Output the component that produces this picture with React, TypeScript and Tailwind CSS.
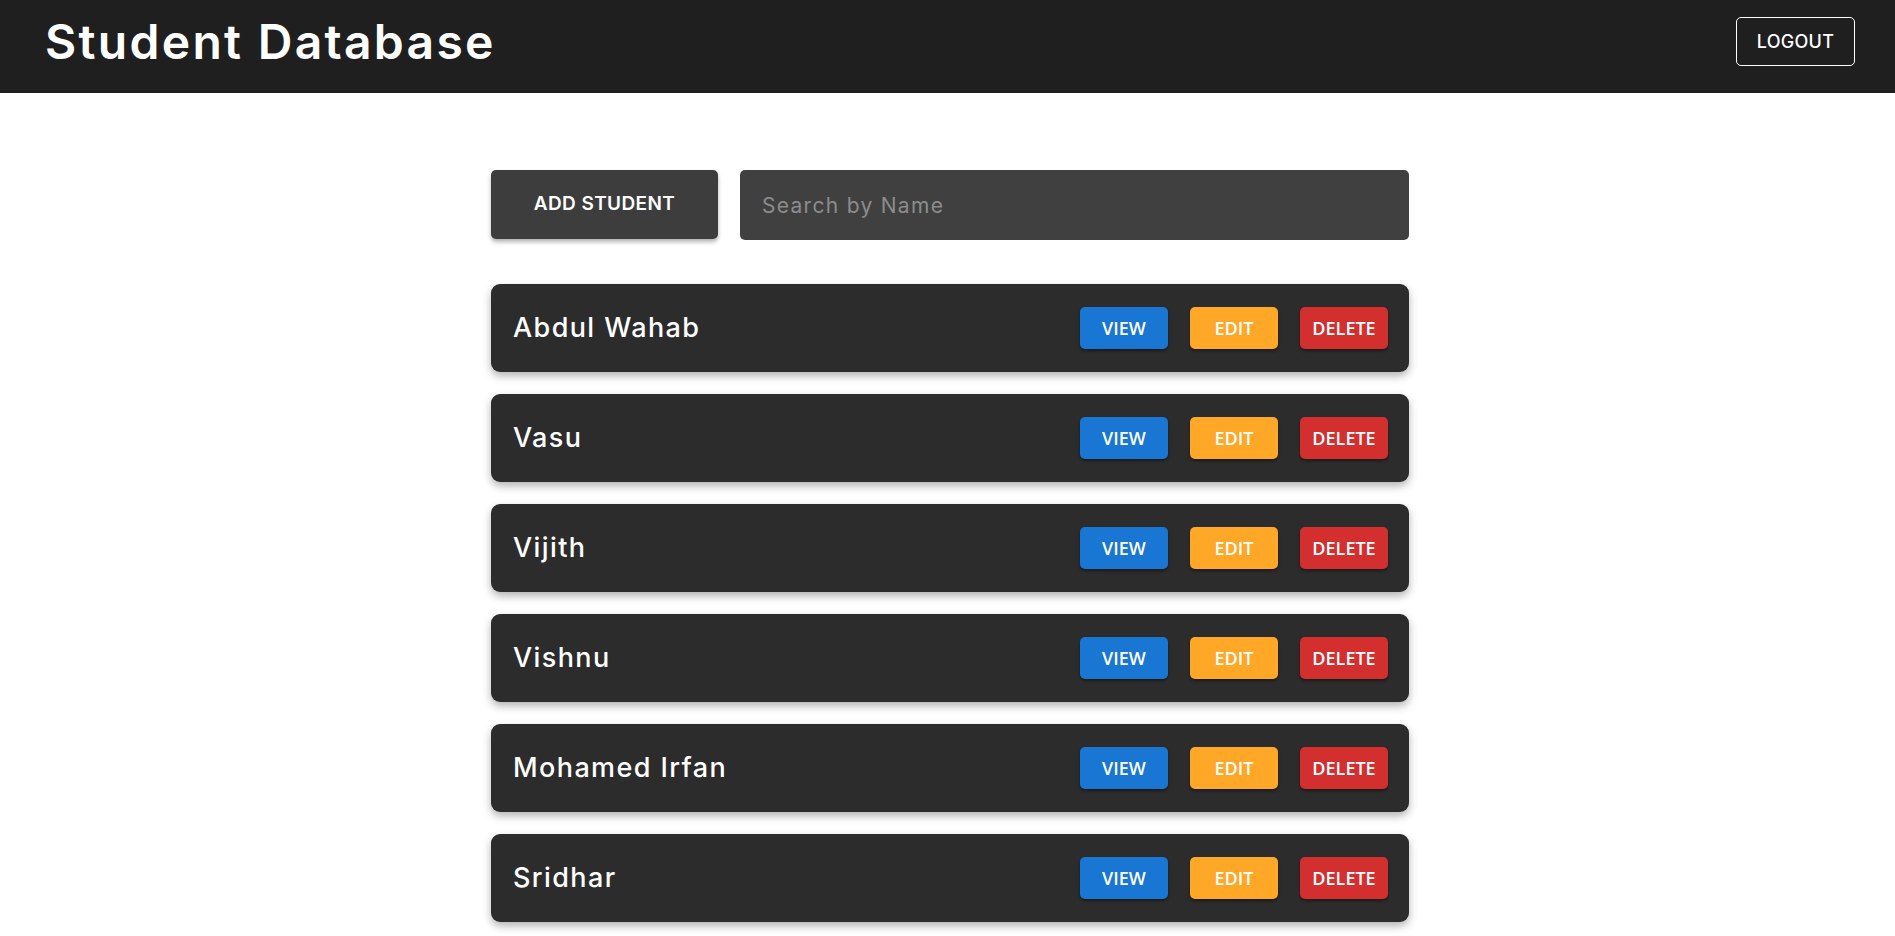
import React from "react";

const students = ["Abdul Wahab", "Vasu", "Vijith", "Vishnu", "Mohamed Irfan", "Sridhar"];

export default function App() {
  return (
    <div className="min-h-screen bg-white font-['Inter','Open_Sans',sans-serif]">
      <header className="h-[93px] bg-[#1f1f1f] flex items-center justify-between pl-[45px] pr-[40px] pb-[10px]">
        <h1 className="text-white text-[48px] font-semibold tracking-[2.3px] leading-none">Student Database</h1>
        <button className="w-[119px] h-[49px] border border-white rounded-[5px] text-white text-[18px] font-medium tracking-[0.3px]">
          LOGOUT
        </button>
      </header>
      <main className="w-[918px] ml-[491px] pt-[77px] pb-[40px]">
        <div className="flex gap-[22px]">
          <button className="w-[227px] h-[69px] bg-[#3d3d3d] rounded-[5px] text-white text-[19px] font-semibold tracking-[0.4px] shadow-[0_3px_4px_rgba(0,0,0,0.3)]">
            ADD STUDENT
          </button>
          <input
            className="flex-1 h-[70px] bg-[#404040] rounded-[5px] px-[22px] text-[21px] tracking-[1.3px] text-white placeholder:text-[#8c8c8c] outline-none"
            placeholder="Search by Name"
          />
        </div>
        <div className="mt-[44px] flex flex-col gap-[22px]">
          {students.map((s) => (
            <div
              key={s}
              className="h-[88px] bg-[#2c2c2c] rounded-[9px] flex items-center justify-between pl-[22px] pr-[21px] shadow-[0_4px_8px_rgba(0,0,0,0.3)]"
            >
              <span className="text-white text-[27px] font-medium tracking-[1.4px]">{s}</span>
              <div className="flex gap-[22px] font-['Open_Sans',sans-serif] text-[18px] font-semibold text-white">
                <button className="w-[88px] h-[42px] rounded-[5px] bg-[#1976d2] shadow-[0_2px_3px_rgba(0,0,0,0.4)]">VIEW</button>
                <button className="w-[88px] h-[42px] rounded-[5px] bg-[#ffa726] shadow-[0_2px_3px_rgba(0,0,0,0.4)]">EDIT</button>
                <button className="w-[88px] h-[42px] rounded-[5px] bg-[#d32f2f] shadow-[0_2px_3px_rgba(0,0,0,0.4)]">DELETE</button>
              </div>
            </div>
          ))}
        </div>
      </main>
    </div>
  );
}
